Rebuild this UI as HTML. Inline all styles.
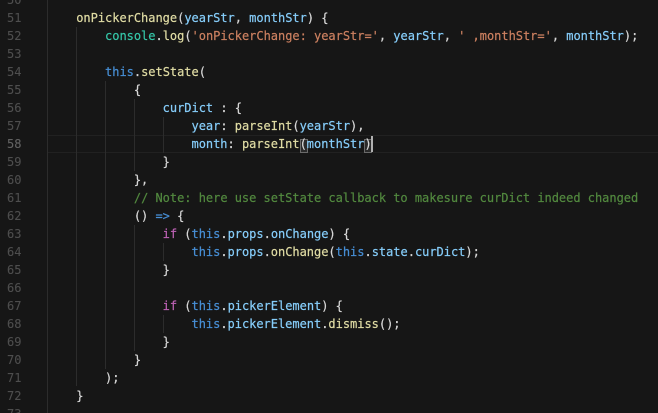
<!DOCTYPE html>
<html>
<head>
<meta charset="utf-8">
<style>
html,body{margin:0;padding:0;width:658px;height:413px;overflow:hidden;background:#161616}
#w{position:relative;width:658px;height:413px;overflow:hidden;filter:blur(.3px)}
.g{position:absolute;width:1px;background:#2c2c2c}
.l{position:absolute;left:47.4px;height:18px;white-space:pre;font:12px/18px "DejaVu Sans Mono","Liberation Mono",monospace;letter-spacing:-.02px;color:#d8d8d8;width:610px;-webkit-text-stroke:.2px currentColor}
.n{position:absolute;left:0;width:21.5px;text-align:right;height:18px;font:12px/18px "DejaVu Sans Mono","Liberation Mono",monospace;color:#4e4e4e;-webkit-text-stroke:.1px currentColor}
i{font-style:normal}
.y{color:#e0dca4}.b{color:#86cdfa}.t{color:#35c6a8}.s{color:#cc8060}.k{color:#478fd6}.c{color:#52893f}.p{color:#bd62b4}
</style>
</head>
<body>
<div id="w">
<div style="position:absolute;left:47px;top:135px;width:611px;height:16px;border-top:1px solid #212121;border-bottom:1px solid #212121"></div>
<div class="g" style="left:47px;top:0;height:413px"></div>
<div class="g" style="left:76px;top:27px;height:359px"></div>
<div class="g" style="left:105px;top:81px;height:288px"></div>
<div class="g" style="left:134px;top:99px;height:72px"></div>
<div class="g" style="left:134px;top:225px;height:126px"></div>
<div class="g" style="left:163px;top:117px;height:36px"></div>
<div class="g" style="left:163px;top:243px;height:18px"></div>
<div class="g" style="left:163px;top:315px;height:18px"></div>
<div style="position:absolute;left:300px;top:139px;width:6px;height:12px;background:#2a2a2a;border:1px solid #6a6a6a"></div>
<div style="position:absolute;left:364px;top:139px;width:6px;height:12px;background:#2a2a2a;border:1px solid #6a6a6a"></div>
<div style="position:absolute;left:371px;top:136px;width:2px;height:16px;background:#b0b0b0"></div>

<div class="n" style="top:-9px">50</div>
<div class="n" style="top:9px">51</div>
<div class="n" style="top:27px">52</div>
<div class="n" style="top:45px">53</div>
<div class="n" style="top:63px">54</div>
<div class="n" style="top:81px">55</div>
<div class="n" style="top:99px">56</div>
<div class="n" style="top:117px">57</div>
<div class="n" style="top:135px;color:#626262">58</div>
<div class="n" style="top:153px">59</div>
<div class="n" style="top:171px">60</div>
<div class="n" style="top:189px">61</div>
<div class="n" style="top:207px">62</div>
<div class="n" style="top:225px">63</div>
<div class="n" style="top:243px">64</div>
<div class="n" style="top:261px">65</div>
<div class="n" style="top:279px">66</div>
<div class="n" style="top:297px">67</div>
<div class="n" style="top:315px">68</div>
<div class="n" style="top:333px">69</div>
<div class="n" style="top:351px">70</div>
<div class="n" style="top:369px">71</div>
<div class="n" style="top:387px">72</div>
<div class="n" style="top:405px">73</div>

<div class="l" style="top:9px">    <i class="y">onPickerChange</i>(<i class="b">yearStr</i>, <i class="b">monthStr</i>) {</div>
<div class="l" style="top:27px">        <i class="t">console</i>.<i class="y">log</i>(<i class="s">'onPickerChange: yearStr='</i>, <i class="b">yearStr</i>, <i class="s">' ,monthStr='</i>, <i class="b">monthStr</i>);</div>
<div class="l" style="top:63px">        <i class="k">this</i>.<i class="y">setState</i>(</div>
<div class="l" style="top:81px">            {</div>
<div class="l" style="top:99px">                <i class="b">curDict</i> : {</div>
<div class="l" style="top:117px">                    <i class="b">year</i>: <i class="y">parseInt</i>(<i class="b">yearStr</i>),</div>
<div class="l" style="top:135px">                    <i class="b">month</i>: <i class="y">parseInt</i>(<i class="b">monthStr</i>)</div>
<div class="l" style="top:153px">                }</div>
<div class="l" style="top:171px">            },</div>
<div class="l" style="top:189px">            <i class="c">// Note: here use setState callback to makesure curDict indeed changed</i></div>
<div class="l" style="top:207px">            () <i class="k">=&gt;</i> {</div>
<div class="l" style="top:225px">                <i class="p">if</i> (<i class="k">this</i>.<i class="b">props</i>.<i class="b">onChange</i>) {</div>
<div class="l" style="top:243px">                    <i class="k">this</i>.<i class="b">props</i>.<i class="y">onChange</i>(<i class="k">this</i>.<i class="b">state</i>.<i class="b">curDict</i>);</div>
<div class="l" style="top:261px">                }</div>
<div class="l" style="top:297px">                <i class="p">if</i> (<i class="k">this</i>.<i class="b">pickerElement</i>) {</div>
<div class="l" style="top:315px">                    <i class="k">this</i>.<i class="b">pickerElement</i>.<i class="y">dismiss</i>();</div>
<div class="l" style="top:333px">                }</div>
<div class="l" style="top:351px">            }</div>
<div class="l" style="top:369px">        );</div>
<div class="l" style="top:387px">    }</div>
</div>
</body>
</html>
